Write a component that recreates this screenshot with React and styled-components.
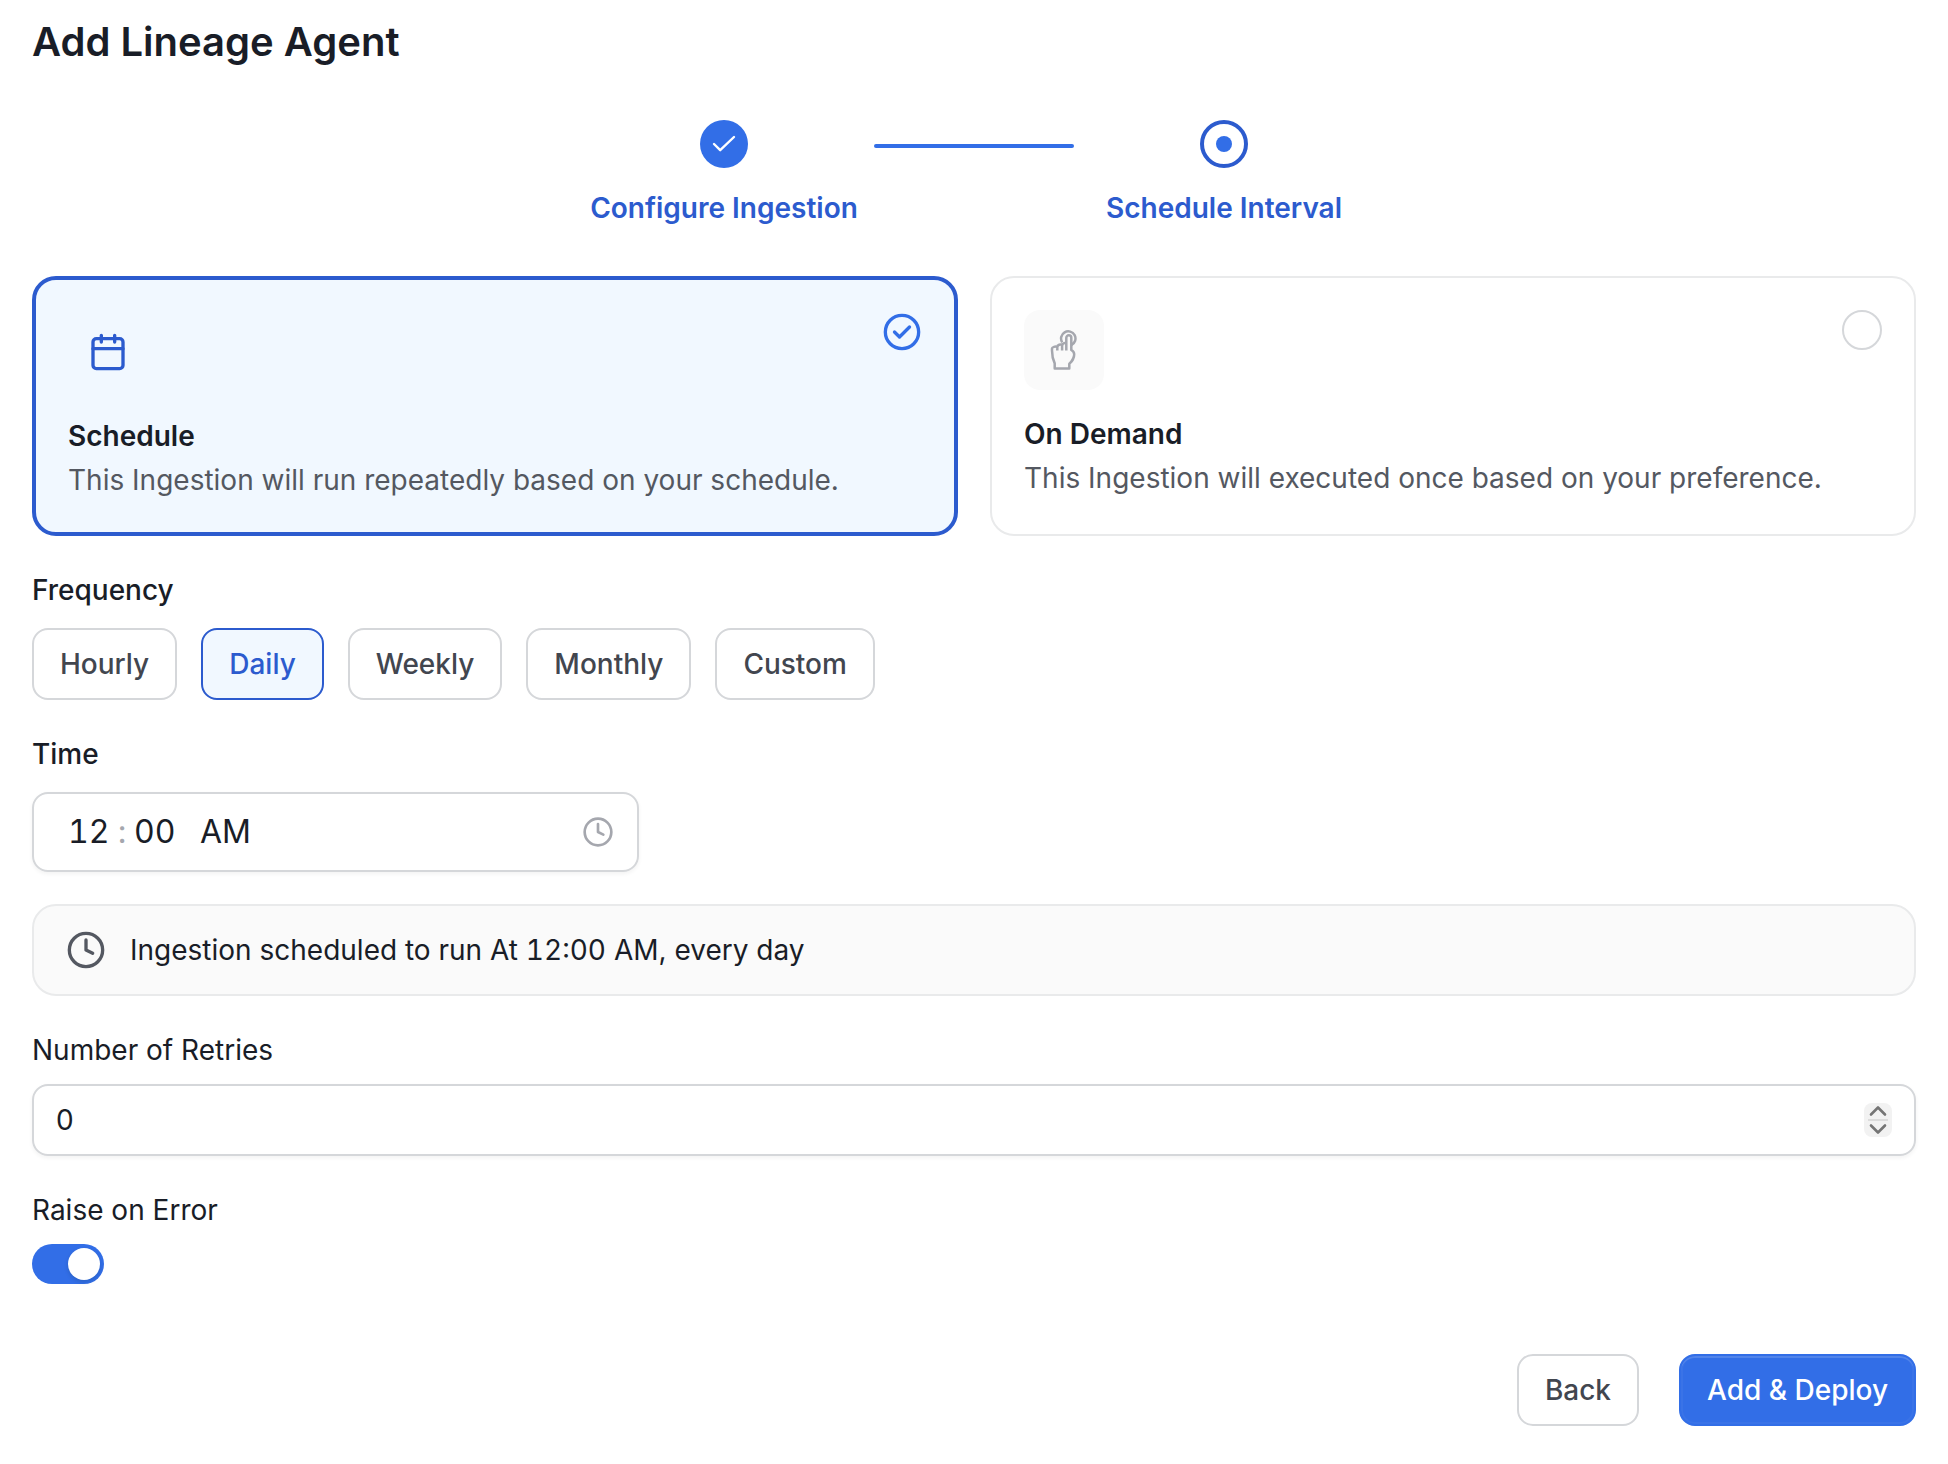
import React, { useState } from 'react';
import styled, { createGlobalStyle, css } from 'styled-components';
import { Clock } from 'lucide-react';

const GlobalStyle = createGlobalStyle`
  * {
    box-sizing: border-box;
  }
  body {
    margin: 0;
    background: #ffffff;
    color: #191d27;
    font-family: Inter, 'Liberation Sans', sans-serif;
    font-size: 28px;
    line-height: 44px;
    font-optical-sizing: none;
    font-variation-settings: 'opsz' 14;
  }
  button, input {
    font: inherit;
    color: inherit;
    font-optical-sizing: none;
    font-variation-settings: 'opsz' 14;
  }
`;

const Page = styled.main`
  padding: 12px 32px 38px;
`;

const Title = styled.h1`
  margin: 0 0 48px;
  font-size: 40px;
  line-height: 60px;
  font-weight: 600;
`;

const Stepper = styled.ol`
  display: flex;
  justify-content: center;
  margin: 0 0 48px;
  padding: 0;
  list-style: none;
`;

const Step = styled.li`
  display: flex;
  flex-direction: column;
  align-items: center;
  gap: 20px;
  width: 300px;
  color: #2c5bce;
  font-weight: 600;
  line-height: 40px;
`;

const StepMark = styled.span`
  display: flex;
  align-items: center;
  justify-content: center;
  width: 48px;
  height: 48px;
  border-radius: 50%;
  ${({ $done }) => $done
    ? css`background: #326ee7;`
    : css`border: 4px solid #2c5bce;`}
`;

const Dot = styled.span`
  width: 16px;
  height: 16px;
  border-radius: 50%;
  background: #326ee7;
`;

const StepLine = styled.li`
  width: 200px;
  height: 4px;
  margin-top: 24px;
  border-radius: 2px;
  background: #326ee7;
`;

const Cards = styled.div`
  display: grid;
  grid-template-columns: 1fr 1fr;
  gap: 32px;
  margin-bottom: 32px;
`;

const Card = styled.label`
  padding: 32px;
  border: 2px solid #e9eaeb;
  border-radius: 24px;
  line-height: 40px;
  cursor: pointer;
  ${({ $active }) => $active && css`
    border: 4px solid #2c5bce;
    background: #f1f8ff;
  `}
`;

const CardTop = styled.span`
  display: flex;
  justify-content: space-between;
  margin-bottom: 24px;
`;

const CardIcon = styled.span`
  display: flex;
  align-items: center;
  justify-content: center;
  width: 80px;
  height: 80px;
  border-radius: 16px;
  color: ${({ $active }) => ($active ? '#2c5bce' : '#a5a7ae')};
  background: ${({ $active }) => ($active ? 'transparent' : '#fafafa')};
`;

const HiddenRadio = styled.input`
  position: absolute;
  opacity: 0;
  pointer-events: none;
`;

const EmptyMark = styled.span`
  width: 40px;
  height: 40px;
  border: 2px solid #d5d7da;
  border-radius: 50%;
`;

const CardTitle = styled.span`
  display: block;
  margin-bottom: 4px;
  font-weight: 600;
`;

const CardText = styled.span`
  display: block;
  color: #545861;
`;

const Section = styled.section`
  display: flex;
  flex-direction: column;
  align-items: flex-start;
  gap: ${({ $tight }) => ($tight ? '12px' : '16px')};
  margin-bottom: 32px;
`;

const Heading = styled.span`
  font-weight: 500;
`;

const Options = styled.div`
  display: flex;
  flex-wrap: wrap;
  gap: 24px;
`;

const Button = styled.button`
  height: 72px;
  padding: 0 26px;
  border: 2px solid #d5d7da;
  border-radius: 16px;
  background: #ffffff;
  color: #42464f;
  font-weight: 500;
  cursor: pointer;
  ${({ $active }) => $active && css`
    border-color: #2c5bce;
    background: #f1f8ff;
    color: #2c5bce;
  `}
`;

const PrimaryButton = styled(Button)`
  border-color: #326ee7;
  background: #326ee7;
  color: #ffffff;
  box-shadow: inset 0 2px 0 rgba(255, 255, 255, 0.12), inset 0 0 0 2px rgba(255, 255, 255, 0.04);
`;

const TimeField = styled.div`
  display: flex;
  align-items: center;
  width: 607px;
  max-width: 100%;
  height: 80px;
  padding: 0 23px 0 34px;
  border: 2px solid #d5d7da;
  border-radius: 16px;
  box-shadow: 0 2px 4px rgba(10, 13, 18, 0.05);
  font-size: 32px;
  color: #191d27;

  svg {
    margin-left: auto;
    color: #a5a7ae;
  }
`;

const Segment = styled.input`
  width: ${({ $wide }) => ($wide ? '56px' : '42px')};
  margin-left: ${({ $wide }) => ($wide ? '24px' : '0')};
  padding: 0;
  border: 0;
  outline: 0;
  background: transparent;
  font-variant-numeric: tabular-nums;
`;

const Colon = styled.span`
  width: 24px;
  text-align: center;
  color: #a5a7ae;
`;

const Notice = styled.div`
  display: flex;
  align-items: center;
  gap: 24px;
  margin-bottom: 32px;
  padding: 24px 32px;
  border: 2px solid #e9eaeb;
  border-radius: 24px;
  background: #fafafa;
  line-height: 40px;

  svg {
    color: #545861;
  }
`;

const ClockTime = styled.time`
  font-variant-numeric: tabular-nums;
`;

const NumberField = styled.div`
  display: flex;
  align-items: center;
  width: 100%;
  height: 72px;
  padding: 0 22px;
  border: 2px solid #d5d7da;
  border-radius: 16px;
  box-shadow: 0 2px 4px rgba(10, 13, 18, 0.05);
`;

const NumberInput = styled.input`
  flex: 1;
  min-width: 0;
  padding: 0;
  border: 0;
  outline: 0;
  background: transparent;
  appearance: textfield;
  &::-webkit-inner-spin-button {
    display: none;
  }
`;

const Spinner = styled.div`
  display: flex;
  flex-direction: column;
  width: 28px;
  height: 34px;
  padding: 0 4px;
  border-radius: 8px;
  background: #f2f2f2;
`;

const SpinButton = styled.button`
  display: flex;
  align-items: center;
  justify-content: center;
  flex: 1;
  padding: 0;
  border: 0;
  background: transparent;
  color: #757575;
  & + & {
    border-top: 2px solid #dcdcdc;
  }
`;

const Switch = styled.input`
  appearance: none;
  width: 72px;
  height: 40px;
  margin: 0;
  padding: 4px;
  border-radius: 20px;
  background: #d5d7da;
  cursor: pointer;
  &::before {
    content: '';
    display: block;
    width: 32px;
    height: 32px;
    border-radius: 50%;
    background: #ffffff;
    box-shadow: 0 2px 4px rgba(0, 35, 11, 0.15);
  }
  &:checked {
    background: #326ee7;
  }
  &:checked::before {
    margin-left: auto;
  }
`;

const Footer = styled.footer`
  display: flex;
  justify-content: flex-end;
  gap: 40px;
  padding-top: 38px;
`;

const StepCheck = () => (
  <svg width="48" height="48" viewBox="0 0 48 48" fill="none" stroke="#ffffff" strokeWidth="2.4" strokeLinecap="round" strokeLinejoin="round">
    <path d="M14 24L20.2 30.2L34 17" />
  </svg>
);

const CalendarIcon = () => (
  <svg width="40" height="40" viewBox="0 0 24 24" fill="none" stroke="currentColor" strokeWidth="2" strokeLinecap="round" strokeLinejoin="round">
    <rect x="3" y="4" width="18" height="18" rx="2" />
    <path d="M3 10H21M8 2V6M16 2V6" />
  </svg>
);

const TapIcon = () => (
  <svg width="40" height="40" viewBox="0 0 40 40" fill="none" stroke="currentColor" strokeWidth="2.5" strokeLinejoin="round">
    <path d="M18.2 12.4A7.2 7.2 0 1 1 27.4 15" />
    <path d="M22.3 20.5V7.8a2.5 2.5 0 0 1 5 0V20c1.8 1 2.9 2.3 2.9 4.2c0 4.6-2 6.6-4.9 9.6V38.6H10.7V33.4C8.9 29.6 8 26 8 20.5V18.6c0-1.6 3.4-2.6 5.3-1.5V20.5" />
    <path d="M13.3 17c0-2.3 3.5-3.2 4.8-1.8V20.5" />
    <path d="M18.1 15.4c0-1.9 2.4-2.8 4.2-2.1" />
  </svg>
);

const SelectedIcon = () => (
  <svg width="40" height="40" viewBox="0 0 24 24" fill="none" stroke="#326ee7" strokeWidth="2" strokeLinecap="round" strokeLinejoin="round">
    <circle cx="12" cy="12" r="10" />
    <path d="M7.5 12L10.5 15L16.5 9" />
  </svg>
);

const Chevron = ({ d }) => (
  <svg width="18" height="12" viewBox="0 0 18 12" fill="none" stroke="currentColor" strokeWidth="2.6" strokeLinecap="round" strokeLinejoin="round">
    <path d={d} />
  </svg>
);

const modes = [
  {
    id: 'schedule',
    title: 'Schedule',
    text: 'This Ingestion will run repeatedly based on your schedule.',
    Icon: CalendarIcon,
  },
  {
    id: 'demand',
    title: 'On Demand',
    text: 'This Ingestion will executed once based on your preference.',
    Icon: TapIcon,
  },
];

const frequencies = ['Hourly', 'Daily', 'Weekly', 'Monthly', 'Custom'];

const App = () => {
  const [mode, setMode] = useState('schedule');
  const [frequency, setFrequency] = useState('Daily');
  const [retries, setRetries] = useState(0);

  return (
    <>
      <GlobalStyle />
      <Page>
        <Title>Add Lineage Agent</Title>

        <Stepper>
          <Step>
            <StepMark $done><StepCheck /></StepMark>
            Configure Ingestion
          </Step>
          <StepLine aria-hidden="true" />
          <Step aria-current="step">
            <StepMark><Dot /></StepMark>
            Schedule Interval
          </Step>
        </Stepper>

        <Cards>
          {modes.map(({ id, title, text, Icon }) => (
            <Card key={id} $active={mode === id}>
              <HiddenRadio
                type="radio"
                name="mode"
                checked={mode === id}
                onChange={() => setMode(id)}
              />
              <CardTop>
                <CardIcon $active={mode === id}><Icon /></CardIcon>
                {mode === id ? <SelectedIcon /> : <EmptyMark />}
              </CardTop>
              <CardTitle>{title}</CardTitle>
              <CardText>{text}</CardText>
            </Card>
          ))}
        </Cards>

        <Section>
          <Heading id="frequency">Frequency</Heading>
          <Options role="group" aria-labelledby="frequency">
            {frequencies.map((item) => (
              <Button
                key={item}
                type="button"
                aria-pressed={frequency === item}
                $active={frequency === item}
                onClick={() => setFrequency(item)}
              >
                {item}
              </Button>
            ))}
          </Options>
        </Section>

        <Section>
          <Heading as="label" htmlFor="hour">Time</Heading>
          <TimeField>
            <Segment id="hour" defaultValue="12" />
            <Colon>:</Colon>
            <Segment aria-label="Minute" defaultValue="00" />
            <Segment $wide aria-label="AM or PM" defaultValue="AM" />
            <Clock size={32} />
          </TimeField>
        </Section>

        <Notice>
          <Clock size={40} />
          <span>Ingestion scheduled to run At <ClockTime>12:00</ClockTime> AM, every day</span>
        </Notice>

        <Section $tight>
          <label htmlFor="retries">Number of Retries</label>
          <NumberField>
            <NumberInput
              id="retries"
              type="number"
              min="0"
              value={retries}
              onChange={(e) => setRetries(+e.target.value)}
            />
            <Spinner>
              <SpinButton type="button" aria-label="Increase" onClick={() => setRetries(retries + 1)}>
                <Chevron d="M2 9.5L9 2.5L16 9.5" />
              </SpinButton>
              <SpinButton type="button" aria-label="Decrease" onClick={() => setRetries(Math.max(0, retries - 1))}>
                <Chevron d="M2 2.5L9 9.5L16 2.5" />
              </SpinButton>
            </Spinner>
          </NumberField>
        </Section>

        <Section $tight>
          <label htmlFor="raise">Raise on Error</label>
          <Switch id="raise" type="checkbox" role="switch" defaultChecked />
        </Section>

        <Footer>
          <Button type="button">Back</Button>
          <PrimaryButton type="button">Add &amp; Deploy</PrimaryButton>
        </Footer>
      </Page>
    </>
  );
};

export default App;
